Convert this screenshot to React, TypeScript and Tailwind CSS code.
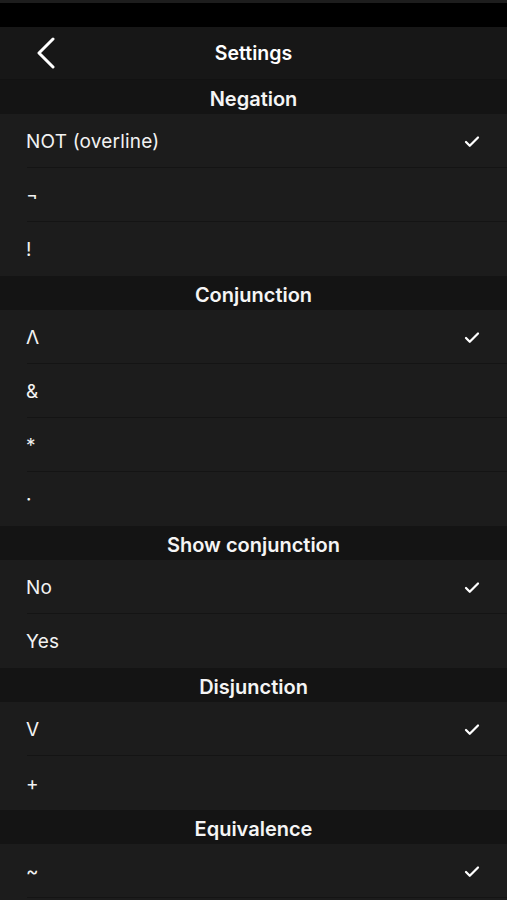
import { Check } from "lucide-react";

type Section = {
  title: string;
  options: string[];
  selected: number;
};

const sections: Section[] = [
  { title: "Negation", options: ["NOT (overline)", "¬", "!"], selected: 0 },
  { title: "Conjunction", options: ["Λ", "&", "*", "·"], selected: 0 },
  { title: "Show conjunction", options: ["No", "Yes"], selected: 0 },
  { title: "Disjunction", options: ["V", "+"], selected: 0 },
  { title: "Equivalence", options: ["~"], selected: 0 },
];

function OptionRow({ label, checked, last }: { label: string; checked: boolean; last: boolean }) {
  return (
    <div className="h-[54px] bg-[#1c1c1c] pl-[27px] flex">
      <div
        className={
          "flex-1 flex items-center justify-between pr-[26px] pt-[3px] " +
          (last ? "" : "border-b border-[#141414]")
        }
      >
        <span className="text-[19px] tracking-[0.2px] text-[#f2f2f2] -ml-px">{label}</span>
        {checked && <Check className="w-[18px] h-[18px] text-white" strokeWidth={3} />}
      </div>
    </div>
  );
}

export default function App() {
  return (
    <div
      className="w-[507px] h-[900px] overflow-hidden bg-[#1c1c1c] text-white"
      style={{ fontFamily: "Inter, 'Noto Sans', sans-serif" }}
    >
      <div className="h-[27px] bg-black border-t-[3px] border-[#1d1d1d]" />
      <div className="h-[53px] bg-[#171717] border-b border-[#121212] flex items-center relative">
        <button className="absolute left-[34px] top-[10px] p-0">
          <svg width="24" height="32" viewBox="0 0 24 32" fill="none">
            <path d="M19 2 L5 16 L19 30" stroke="white" strokeWidth="3" strokeLinecap="round" strokeLinejoin="round" />
          </svg>
        </button>
        <div className="flex-1 text-center text-[19.5px] font-semibold pt-[2px]">Settings</div>
      </div>
      {sections.map((s, si) => (
        <div key={s.title}>
          <div className="h-[34px] bg-[#141414] flex items-center justify-center pt-[3px] text-[20px] font-semibold text-[#f5f5f5]">
            {s.title}
          </div>
          {s.options.map((o, i) => (
            <OptionRow
              key={o}
              label={o}
              checked={i === s.selected}
              last={i === s.options.length - 1 && si < sections.length - 1}
            />
          ))}
        </div>
      ))}
    </div>
  );
}
